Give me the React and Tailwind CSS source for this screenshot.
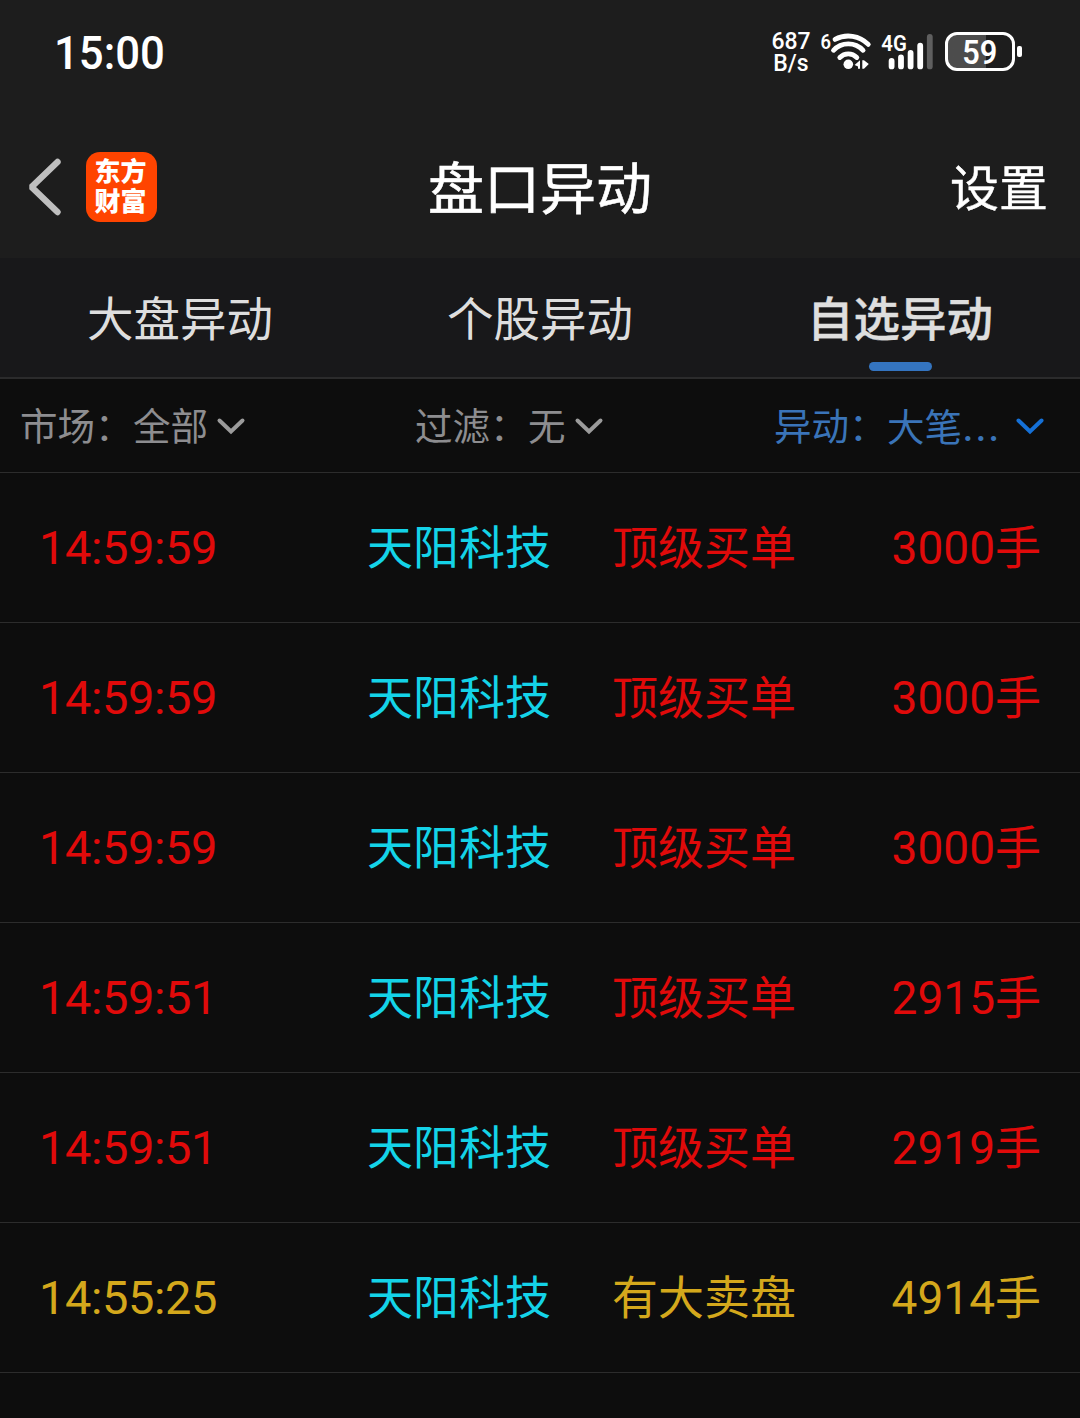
import React from "react";

const ROWS = [
  { time: "14:59:59", type: "顶级买单", amount: "3000", tone: "text-[#e00a0a]" },
  { time: "14:59:59", type: "顶级买单", amount: "3000", tone: "text-[#e00a0a]" },
  { time: "14:59:59", type: "顶级买单", amount: "3000", tone: "text-[#e00a0a]" },
  { time: "14:59:51", type: "顶级买单", amount: "2915", tone: "text-[#e00a0a]" },
  { time: "14:59:51", type: "顶级买单", amount: "2919", tone: "text-[#e00a0a]" },
  { time: "14:55:25", type: "有大卖盘", amount: "4914", tone: "text-[#d4a81c]" },
];

function Chevron({ className }) {
  return (
    <svg className={className} width="30" height="20" viewBox="0 0 30 20" fill="none" stroke="currentColor" strokeWidth="4" strokeLinecap="round">
      <path d="M3.5 4.5 L15 15.5 L26.5 4.5" />
    </svg>
  );
}

function WifiIcon() {
  return (
    <svg className="ml-[9px] mt-[31px] shrink-0" width="52" height="40" viewBox="0 0 52 40" fill="none">
      <text x="0.6" y="17.8" fontSize="21" fontWeight="600" fill="#fff" textLength="10.5" lengthAdjust="spacingAndGlyphs">6</text>
      <g stroke="#fff" strokeWidth="4.8" strokeLinecap="round">
        <path d="M15 8.4 A28 28 0 0 1 48.3 13.4" />
        <path d="M13.5 19.3 A20.3 20.3 0 0 1 43.1 19.3" />
        <path d="M19.8 26.5 A12 12 0 0 1 36.8 26.5" />
      </g>
      <circle cx="28.3" cy="33.3" r="4.8" fill="#fff" />
      <path d="M40 29.3 V37.8 H38 V35.5 L34.6 34 Z M42.3 29.3 H44 L48.8 33 L44 37.8 H42.3 Z" fill="#fff" />
    </svg>
  );
}

function SignalIcon() {
  return (
    <svg className="ml-[8px] mt-[31px] shrink-0" width="54" height="40" viewBox="0 0 54 40" fill="none" strokeLinecap="round" strokeWidth="5.8">
      <text x="1.3" y="19.8" fontSize="22.5" fontWeight="600" fill="#fff" textLength="25.5" lengthAdjust="spacingAndGlyphs">4G</text>
      <path stroke="#fff" d="M11.6 30 V35.4 M21 26.5 V35.4 M30.6 22 V35.4 M40.2 14.7 V35.4" />
      <path stroke="#5f5f5f" d="M49.8 5.8 V35.4" />
    </svg>
  );
}

function StatusBar() {
  return (
    <div className="flex h-[110px] items-start bg-[#1d1d1d] pl-[54px] text-white">
      <span className="mt-[28px] w-[717px] origin-left scale-x-[0.93] text-[47px] leading-[50px] font-medium">15:00</span>
      <div className="mt-[31px] flex w-[40px] flex-col items-center text-[23px] leading-[22px] font-medium">
        <span>687</span>
        <span>B/s</span>
      </div>
      <WifiIcon />
      <SignalIcon />
      <div className="mt-[32px] ml-[11px] flex items-center">
        <div className="flex h-[39px] w-[70px] items-center justify-center rounded-[12px] border-[3px] border-white bg-linear-to-r from-[#4c4c4c] from-59% to-[#1d1d1d] to-59%">
          <span className="scale-x-[0.93] pt-px text-[33px] leading-none font-semibold">59</span>
        </div>
        <div className="ml-[2px] h-[11px] w-[5px] rounded-[2px] bg-white" />
      </div>
    </div>
  );
}

function TitleBar() {
  return (
    <div className="grid h-[148px] grid-cols-[1fr_auto_1fr] items-center bg-[#1d1d1d] pt-[6px] text-white">
      <div className="flex items-center pl-[27px]">
        <svg width="36" height="58" viewBox="0 0 36 58" fill="none" stroke="#bfbfbf" strokeWidth="6.4" strokeLinecap="round">
          <path d="M30.5 4 L4.5 29 L30.5 54" strokeLinejoin="bevel" />
        </svg>
        <div className="ml-[23px] flex h-[70px] w-[71px] flex-col items-center justify-center rounded-[14px] bg-[#ff4400] pr-[2px] text-[26px] leading-[30px] font-black">
          <span>东方</span>
          <span>财富</span>
        </div>
      </div>
      <h1 className="pt-[5px] text-[56px] leading-[64px] font-normal [-webkit-text-stroke:0.6px_white]">盘口异动</h1>
      <span className="pt-[6px] pr-[32px] text-right text-[49px] leading-[56px] font-normal [-webkit-text-stroke:0.4px_white]">设置</span>
    </div>
  );
}

function Tabs() {
  return (
    <div className="grid h-[121px] grid-cols-3 border-b-2 border-[#2b2b2c] bg-[#18181a] text-center text-[46.5px] leading-[60px] text-[#dedede]">
      <div className="pt-[32px]">大盘异动</div>
      <div className="pt-[32px]">个股异动</div>
      <div className="flex flex-col items-center pt-[32px]">
        <span className="font-medium [-webkit-text-stroke:0.4px_#dedede]">自选异动</span>
        <div className="mt-[12px] h-[9px] w-[63px] rounded-full bg-[#3474c0]" />
      </div>
    </div>
  );
}

function FilterLabel({ children }) {
  return (
    <span className="flex w-[113px]">
      {children}
      <span>：</span>
    </span>
  );
}

function Filters() {
  return (
    <div className="flex h-[94px] items-center border-b border-[#2c2c2c] pl-[20px] text-[37.5px] leading-[50px] text-[#8d8d90]">
      <div className="flex w-[395px] items-center">
        <span className="flex pt-[3px]"><FilterLabel>市场</FilterLabel>全部</span>
        <Chevron className="ml-[8px] text-[#9b9b9b]" />
      </div>
      <div className="flex w-[359px] items-center">
        <span className="flex pt-[3px]"><FilterLabel>过滤</FilterLabel>无</span>
        <Chevron className="ml-[8px] text-[#9b9b9b]" />
      </div>
      <div className="flex items-center text-[#3a74b8]">
        <span className="flex pt-[3px]">
          <FilterLabel>异动</FilterLabel>
          <span className="w-[128px]">大笔<span className="text-[46px] leading-none tracking-[0.8px]">...</span></span>
        </span>
        <Chevron className="text-[#1570d6]" />
      </div>
    </div>
  );
}

export default function App() {
  return (
    <main className="h-[1418px] w-[1080px] overflow-hidden bg-[#0d0d0d] font-[Roboto,'Noto_Sans_CJK_SC',sans-serif]">
      <StatusBar />
      <TitleBar />
      <Tabs />
      <Filters />
      {ROWS.map((row, i) => (
        <div key={i} className={`flex h-[150px] items-center border-b border-[#2c2c2c] pr-[39px] pl-[39px] text-[46px] leading-[60px] ${row.tone}`}>
          <span className="w-[328px] pt-px text-[47px] tracking-[-0.4px]">{row.time}</span>
          <span className="w-[245px] text-[#14d3e8]">天阳科技</span>
          <span className="w-[230px]">{row.type}</span>
          <span className="flex-1 text-right whitespace-nowrap">{row.amount}手</span>
        </div>
      ))}
    </main>
  );
}
